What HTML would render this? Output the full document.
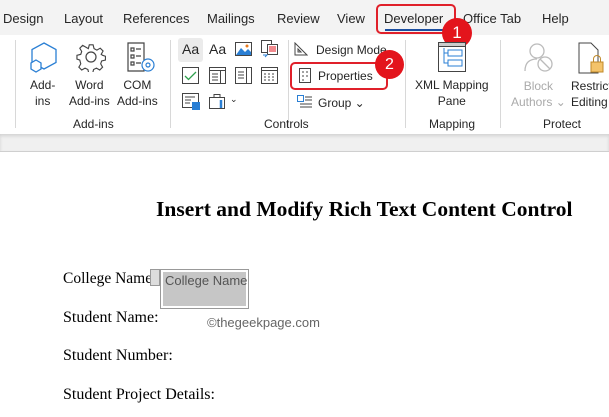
<!DOCTYPE html>
<html><head><meta charset="utf-8"><style>
*{margin:0;padding:0;box-sizing:border-box}
body{width:609px;height:417px;overflow:hidden;position:relative;background:#fff;font-family:"Liberation Sans",sans-serif;color:#262626}
.a{position:absolute;white-space:nowrap}
.t{font-size:13px;top:11px}
.r{font-size:12px}
.sep{position:absolute;top:40px;width:1px;height:88px;background:#d8d8d8}
.lab{position:absolute;top:117px;font-size:12px}
.s{font-family:"Liberation Serif",serif;color:#000;font-size:16px}
</style></head><body>
<div class="a" style="left:0;top:0;width:609px;height:35px;background:#f3f3f3"></div>
<div class="a" style="left:0;top:134px;width:609px;height:17px;background:#f0f0f0;box-shadow:inset 0 2px 3px rgba(0,0,0,.12)"></div>
<div class="a" style="left:0;top:151px;width:609px;height:1px;background:#cfcfcf"></div>
<div class="a t" style="left:3px">Design</div>
<div class="a t" style="left:64px">Layout</div>
<div class="a t" style="left:123px">References</div>
<div class="a t" style="left:207px">Mailings</div>
<div class="a t" style="left:277px">Review</div>
<div class="a t" style="left:337px">View</div>
<div class="a t" style="left:384px;color:#222">Developer</div>
<div class="a" style="left:385px;top:29px;width:59px;height:2px;background:#1a4ea0"></div>
<div class="a" style="left:376px;top:4px;width:80px;height:30px;border:2px solid #e0202a;border-radius:5px"></div>
<div class="a t" style="left:463px">Office Tab</div>
<div class="a t" style="left:542px">Help</div>
<div class="a" style="left:442px;top:18px;width:30px;height:30px;border-radius:50%;background:#e3141c;color:#fff;font-size:17px;text-align:center;line-height:30px">1</div>

<div class="sep" style="left:15px"></div><div class="sep" style="left:170px"></div><div class="sep" style="left:288px"></div><div class="sep" style="left:405px"></div><div class="sep" style="left:500px"></div>

<svg class="a" style="left:28px;top:42px" width="32" height="32" viewBox="0 0 32 32" fill="none" stroke="#2a7fd4" stroke-width="1.3"><path d="M16 1l12 6.5v13L16 27 4 20.5v-13z"/><path d="M8 18l5 3v6l-5 3-5-3v-6z" fill="#fff"/></svg>
<div class="a r" style="left:30px;top:77px;text-align:center;line-height:16px">Add-<br>ins</div>
<svg class="a" style="left:76px;top:42px" width="30" height="30" viewBox="0 0 30 30" fill="none" stroke="#444" stroke-width="1.2"><circle cx="15" cy="15" r="5"/><path d="M13 2h4l1 4 3 1.5 3.5-2 3 3-2 3.5L27 13l3 1v4l-4 1-1 3 2 3.5-3 3-3.5-2-3 1.5-1 4h-4l-1-4-3-1.5-3.5 2-3-3 2-3.5L3 18l-3-1v-4l4-1 1-3-2-3.5 3-3 3.5 2L12 6z" transform="scale(.95) translate(1 1)"/></svg>
<div class="a r" style="left:69px;top:77px;text-align:center;line-height:16px">Word<br>Add-ins</div>
<svg class="a" style="left:126px;top:42px" width="30" height="32" viewBox="0 0 30 32" fill="none" stroke="#444" stroke-width="1.2"><path d="M2 1h16v28H2z"/><path d="M5 6h3v3H5zM5 13h3v3H5zM5 20h3v3H5zM10 7h5M10 14h5M10 21h5"/><circle cx="22" cy="23" r="6" stroke="#2a7fd4" fill="#fff"/><circle cx="22" cy="23" r="2" stroke="#2a7fd4"/></svg>
<div class="a r" style="left:117px;top:77px;text-align:center;line-height:16px">COM<br>Add-ins</div>
<div class="lab" style="left:73px">Add-ins</div>

<div class="a" style="left:178px;top:38px;width:25px;height:24px;background:#ebebeb;border-radius:3px"></div>
<div class="a" style="left:182px;top:41px;font-size:14px">Aa</div>
<div class="a" style="left:209px;top:41px;font-size:14px">Aa</div>
<svg class="a" style="left:235px;top:42px" width="17" height="14"><rect x=".5" y=".5" width="16" height="13" fill="#fff" stroke="#444"/><path d="M1 13L6 6l4 4 3-3 3 3v3z" fill="#2a7fd4"/><circle cx="12" cy="4" r="1.5" fill="#e87a1e"/></svg>
<svg class="a" style="left:261px;top:40px" width="17" height="18"><rect x=".5" y=".5" width="10" height="12" fill="#fff" stroke="#444"/><rect x="6.5" y="4.5" width="10" height="10" fill="#fff" stroke="#444"/><path d="M8 7h7M8 9h7M8 11h7" stroke="#e3141c"/><path d="M2 15h4l-2 2" stroke="#2a7fd4" fill="none"/></svg>
<svg class="a" style="left:182px;top:67px" width="17" height="17"><rect x=".5" y=".5" width="16" height="16" fill="#fff" stroke="#444"/><path d="M3 9l3.5 3.5L14 5" stroke="#2ea04d" fill="none" stroke-width="1.3"/></svg>
<svg class="a" style="left:209px;top:67px" width="17" height="17" fill="none" stroke="#444"><rect x=".5" y=".5" width="16" height="16"/><path d="M.5 3.5h16M11.5 3.5v13M3 7h6M3 10h6M3 13h6"/></svg>
<svg class="a" style="left:235px;top:67px" width="17" height="17" fill="none" stroke="#444"><rect x=".5" y=".5" width="16" height="16"/><path d="M11.5 .5v16M3 5h6M3 8h6M3 11h6"/></svg>
<svg class="a" style="left:261px;top:67px" width="17" height="17" fill="none" stroke="#444"><rect x=".5" y=".5" width="16" height="16"/><path d="M.5 3.5h16M3 7h2M7 7h2M11 7h2M3 10h2M7 10h2M11 10h2M3 13h2M7 13h2M11 13h2"/></svg>
<svg class="a" style="left:182px;top:93px" width="18" height="17"><rect x=".5" y=".5" width="16" height="14" fill="#fff" stroke="#444"/><path d="M3 4h10M3 7h6M3 10h5" stroke="#444"/><rect x="10" y="9" width="8" height="8" fill="#2a7fd4"/></svg>
<svg class="a" style="left:209px;top:94px" width="18" height="15" fill="none" stroke="#444"><rect x=".5" y="3.5" width="15" height="11"/><path d="M5 3.5V.5h6v3"/><path d="M12 6v8" stroke="#2a7fd4" stroke-width="2.5"/></svg>
<div class="a" style="left:230px;top:94px;font-size:9px">⌄</div>
<svg class="a" style="left:294px;top:42px" width="14" height="14" fill="none" stroke="#444"><path d="M1 13V1l12 12zM4 10V7l3 3z"/></svg>
<div class="a r" style="left:316px;top:43px">Design Mode</div>
<svg class="a" style="left:299px;top:68px" width="12" height="15" fill="none" stroke="#444"><rect x=".5" y=".5" width="11" height="14"/><path d="M3 4h2M3 8h2M3 12h2M7 4h2M7 8h2"/></svg>
<div class="a r" style="left:318px;top:69px">Properties</div>
<div class="a" style="left:290px;top:62px;width:98px;height:28px;border:2px solid #e0202a;border-radius:5px"></div>
<div class="a" style="left:375px;top:50px;width:29px;height:29px;border-radius:50%;background:#e3141c;color:#fff;font-size:16px;text-align:center;line-height:29px">2</div>
<svg class="a" style="left:297px;top:95px" width="16" height="14" fill="none" stroke="#444"><rect x=".5" y=".5" width="6" height="6" stroke="#2a7fd4"/><path d="M8 2h7M8 5h7M3 9h12M3 12h12"/></svg>
<div class="a r" style="left:318px;top:96px">Group ⌄</div>
<div class="lab" style="left:264px">Controls</div>

<svg class="a" style="left:438px;top:42px" width="30" height="31"><rect x=".5" y=".5" width="27" height="29" fill="#fff" stroke="#444"/><rect x=".5" y=".5" width="27" height="4" fill="#ccc" stroke="#444"/><g fill="none" stroke="#2a7fd4"><rect x="10" y="8" width="14" height="6"/><rect x="10" y="18" width="14" height="6"/><path d="M6 6v15h4M6 11h4"/></g></svg>
<div class="a r" style="left:415px;top:77px;text-align:center;line-height:16px">XML Mapping<br>Pane</div>
<div class="lab" style="left:429px">Mapping</div>

<svg class="a" style="left:524px;top:42px" width="30" height="30" fill="none" stroke="#bbb" stroke-width="1.3"><circle cx="13" cy="9" r="7"/><path d="M1 29c0-9 5-12 12-12"/><circle cx="21" cy="22" r="7"/><path d="M16 17l10 10"/></svg>
<div class="a r" style="left:511px;top:78px;text-align:center;line-height:16px;color:#aaa">Block<br>Authors ⌄</div>
<svg class="a" style="left:578px;top:42px" width="26" height="32"><path d="M1 1h12l7 7v23H1z" fill="#fff" stroke="#444"/><rect x="13" y="20" width="12" height="10" fill="#f4c36a" stroke="#c08a2a"/><path d="M15.5 20v-3a3.5 3.5 0 017 0v3" fill="none" stroke="#c08a2a"/></svg>
<div class="a r" style="left:571px;top:78px;line-height:16px">Restrict<br>Editing</div>
<div class="lab" style="left:543px">Protect</div>

<div class="a s" style="left:156px;top:197px;font-size:21.5px;font-weight:bold">Insert and Modify Rich Text Content Control</div>
<div class="a s" style="left:63px;top:270px;font-size:15.5px">College Name</div>
<div class="a" style="left:150px;top:269px;width:10px;height:17px;background:#ddd;border:1px solid #999"></div>
<div class="a" style="left:160px;top:269px;width:89px;height:40px;border:1px solid #999;background:#fff"><div style="margin:2px;height:34px;background:#c6c6c6;font-size:13px;color:#555;padding:1px 0 0 2px">College Name</div></div>
<div class="a s" style="left:63px;top:309px">Student Name:</div>
<div class="a" style="left:207px;top:315px;font-size:13px;color:#666">©thegeekpage.com</div>
<div class="a s" style="left:63px;top:347px">Student Number:</div>
<div class="a s" style="left:63px;top:386px">Student Project Details:</div>
</body></html>
